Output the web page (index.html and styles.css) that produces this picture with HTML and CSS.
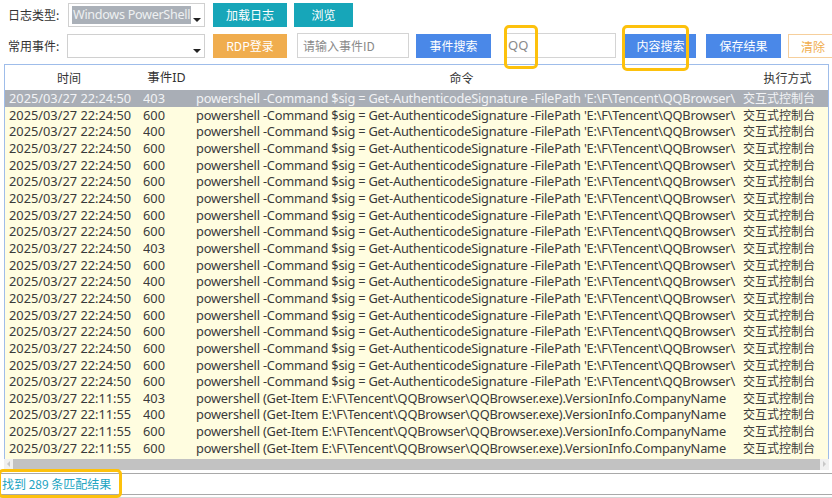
FILE: index.html
```html
<!DOCTYPE html>
<html lang="zh">
<head>
<meta charset="utf-8">
<link rel="stylesheet" href="styles.css">
</head>
<body>
<div class="app">
  <div class="toolbar">
    <div class="row row1">
      <span class="label">日志类型:</span>
      <div class="combo"><span class="sel">Windows PowerShell</span><span class="arrow"></span></div>
      <button class="btn teal w74">加载日志</button>
      <button class="btn teal w59">浏览</button>
    </div>
    <div class="row row2">
      <span class="label">常用事件:</span>
      <div class="combo combo2"><span class="arrow"></span></div>
      <button class="btn orange w74">RDP登录</button>
      <div class="input w112 ph">请输入事件ID</div>
      <button class="btn blue w75">事件搜索</button>
      <div class="input w112 qq">QQ</div>
      <button class="btn blue w71">内容搜索</button>
      <button class="btn blue w75 save">保存结果</button>
      <button class="btn outline">清除</button>
    </div>
  </div>

  <div class="table">
    <div class="thead">
      <div class="c1">时间</div>
      <div class="c2">事件ID</div>
      <div class="c3">命令</div>
      <div class="c4">执行方式</div>
    </div>
    <div class="tbody" id="tbody"></div>
  </div>
  <div class="hscroll">
    <span class="harr left"></span>
    <span class="thumb"></span>
    <span class="harr right"></span>
  </div>
  <div class="status"><span class="found">找到 289 条匹配结果</span></div>
  <div class="bottom"></div>

  <div class="hl hl1"></div>
  <div class="hl hl2"></div>
  <div class="hl hl3"></div>
</div>
<script>
var a = "powershell -Command $sig = Get-AuthenticodeSignature -FilePath 'E:\\F\\Tencent\\QQBrowser\\";
var b = "powershell (Get-Item E:\\F\\Tencent\\QQBrowser\\QQBrowser.exe).VersionInfo.CompanyName";
var rows = [
 ["22:24:50","403",a],["22:24:50","600",a],["22:24:50","400",a],["22:24:50","600",a],
 ["22:24:50","600",a],["22:24:50","600",a],["22:24:50","600",a],["22:24:50","600",a],
 ["22:24:50","600",a],["22:24:50","403",a],["22:24:50","600",a],["22:24:50","400",a],
 ["22:24:50","600",a],["22:24:50","600",a],["22:24:50","600",a],["22:24:50","600",a],
 ["22:24:50","600",a],["22:24:50","600",a],["22:11:55","403",b],["22:11:55","400",b],
 ["22:11:55","600",b],["22:11:55","600",b]
];
var tb = document.getElementById("tbody");
rows.forEach(function(r, i){
  var d = document.createElement("div");
  d.className = "tr" + (i === 0 ? " selected" : "");
  var cells = ["2025/03/27 " + r[0], r[1], r[2], "交互式控制台"];
  cells.forEach(function(t, j){
    var c = document.createElement("div");
    c.className = "c" + (j + 1);
    c.textContent = t;
    d.appendChild(c);
  });
  tb.appendChild(d);
});
</script>
</body>
</html>
```

FILE: styles.css
```css
html, body {
  margin: 0;
  padding: 0;
  background: #ffffff;
}
body {
  font-family: "Noto Sans", "Noto Sans CJK SC", sans-serif;
  font-size: 13px;
  color: #333333;
  width: 832px;
  height: 498px;
  overflow: hidden;
}
.app {
  position: relative;
  width: 832px;
  height: 498px;
  overflow: hidden;
}
.toolbar {
  padding-top: 2px;
}
.row {
  display: flex;
  align-items: center;
  height: 25px;
  padding-left: 8px;
}
.row > * {
  flex-shrink: 0;
}
.row2 {
  margin-top: 6px;
}
.label {
  width: 59px;
  font-family: "Noto Sans CJK SC", sans-serif;
  font-size: 12px;
  color: #333;
  line-height: 25px;
}
.combo {
  position: relative;
  box-sizing: border-box;
  width: 137px;
  height: 24px;
  border: 1px solid #d0d0d0;
  background: #fff;
  margin-left: 1px;
  margin-right: 8px;
}
.combo2 {
  width: 138px;
  margin-left: 0;
}
.combo .sel {
  position: absolute;
  left: 3px;
  top: 2px;
  height: 18px;
  line-height: 18px;
  padding: 0 1px;
  background: #aab0b8;
  color: #eef0f2;
  font-size: 12.6px;
  letter-spacing: -0.3px;
  white-space: nowrap;
}
.combo .arrow {
  position: absolute;
  right: 3px;
  bottom: 4px;
  width: 0;
  height: 0;
  border-left: 4px solid transparent;
  border-right: 4px solid transparent;
  border-top: 4px solid #222;
}
.btn {
  box-sizing: border-box;
  height: 24px;
  border: none;
  padding: 0;
  margin: 0 7px 0 0;
  font-family: "Noto Sans CJK SC", sans-serif;
  font-size: 12px;
  color: #ffffff;
  line-height: 24px;
  text-align: center;
}
.teal { background: #17a6b9; }
.orange { background: #f0ad4e; }
.blue { background: #4a88e8; }
.outline {
  background: #fff;
  border: 1px solid #f6cf9c;
  color: #f0ad4e;
  width: 50px;
  margin-right: 0;
}
.w74 { width: 74px; }
.w59 { width: 59px; }
.w75 { width: 75px; }
.w71 { width: 71px; }
.w112 { width: 112px; }
.row2 .w74 { margin-right: 10px; }
.row2 .w75 { margin-right: 13px; }
.row2 .save { margin-right: 7px; }
.input {
  box-sizing: border-box;
  height: 25px;
  border: 1px solid #d4d4d4;
  background: #fff;
  margin-right: 7px;
  padding-left: 5px;
  line-height: 23px;
  font-family: "Noto Sans CJK SC", sans-serif;
  font-size: 12px;
}
.ph { color: #8a8a8a; }
.qq {
  color: #8a8a8a;
  padding-left: 3px;
  font-family: "Noto Sans", sans-serif;
  font-size: 13px;
  margin-right: 9px;
}
.row2 .w71 { margin-right: 10px; }

.table {
  box-sizing: border-box;
  margin: 6px 3px 0 4px;
  height: 395px;
  border: 1px solid #9fbdea;
  border-bottom: none;
  overflow: hidden;
  background: #fffde0;
}
.thead, .tr {
  display: grid;
  grid-template-columns: 138px 53px 547px 1fr;
  white-space: nowrap;
}
.thead {
  height: 25px;
  line-height: 26px;
  background: #fff;
  font-family: "Noto Sans CJK SC", sans-serif;
  font-size: 12px;
  color: #333;
  text-align: center;
}
.thead .c1 { padding-right: 10px; }
.thead .c2 { padding-right: 6px; font-family: "Noto Sans", "Noto Sans CJK SC", sans-serif; font-size: 12.5px; }
.thead .c3 { padding-right: 16px; }
.thead .c4 { padding-left: 4px; }
.tbody {
  background: #fffde0;
}
.tr {
  height: 16.66px;
  line-height: 16.66px;
  color: #3a3a3a;
  font-size: 12.8px;
}
.tr > div {
  overflow: hidden;
}
.tr .c1 { padding-left: 4px; }
.tr .c3 {
  margin-right: 4px;
  letter-spacing: -0.2px;
}
.tr .c4 {
  font-family: "Noto Sans CJK SC", sans-serif;
  font-size: 12px;
}
.tr.selected {
  background: #a9aeb6;
  color: #f2f3f5;
}
.hscroll {
  position: relative;
  margin: 0 3px 0 4px;
  height: 11px;
  background: #c2c2c2;
  display: flex;
}
.harr {
  width: 9px;
  background: #f0f0f0;
  position: relative;
}
.harr.left::after, .harr.right::after {
  content: "";
  position: absolute;
  top: 2px;
  border-top: 3px solid transparent;
  border-bottom: 3px solid transparent;
}
.harr.left::after { left: 3px; border-right: 3px solid #c8c8c8; }
.harr.right::after { left: 3px; border-left: 3px solid #c8c8c8; }
.thumb { flex: 1; }
.status {
  margin-top: 3px;
  height: 20px;
  border-top: 1px solid #a9a9a9;
  border-bottom: 1px solid #a9a9a9;
  line-height: 20px;
  padding-left: 2px;
}
.found {
  font-family: "Noto Sans CJK SC", sans-serif;
  color: #21a4c2;
  font-size: 12px;
}
.bottom {
  margin-top: 2px;
  height: 3px;
  background: #d6d6d6;
}
.hl {
  position: absolute;
  box-sizing: border-box;
  border: 3px solid #fdc10c;
  border-radius: 5px;
}
.hl1 { left: 504px; top: 25px; width: 34px; height: 44px; }
.hl2 { left: 622px; top: 25px; width: 67px; height: 46px; }
.hl3 { left: -2px; top: 469px; width: 124px; height: 29px; }
```
